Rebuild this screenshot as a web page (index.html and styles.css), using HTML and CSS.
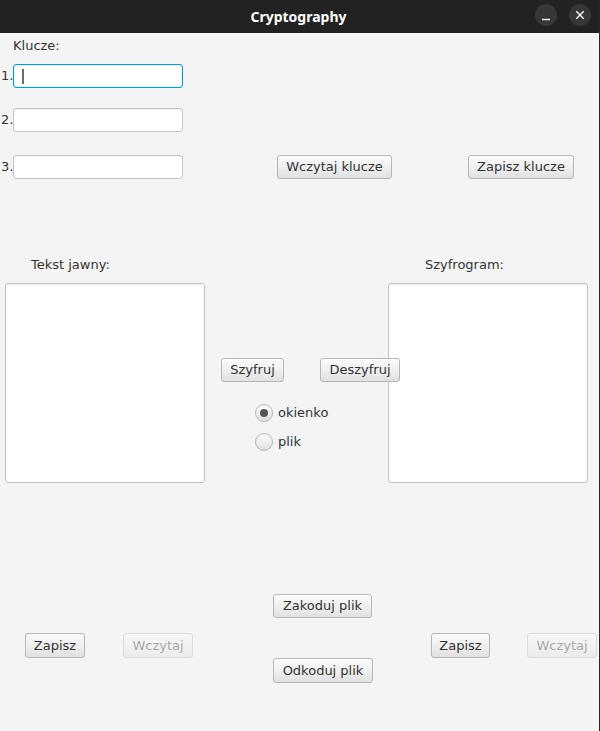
FILE: index.html
```html
<!DOCTYPE html>
<html lang="pl">
<head>
<meta charset="utf-8">
<title>Cryptography</title>
<link rel="stylesheet" href="styles.css">
</head>
<body>
<div class="window">
  <header class="titlebar">
    <span class="title">Cryptography</span>
    <div class="wm-buttons">
      <span class="wm-btn">
        <svg width="22" height="22" viewBox="0 0 22 22"><path d="M7 15.5h8" stroke="#ffffff" stroke-width="1.4"/></svg>
      </span>
      <span class="wm-btn">
        <svg width="22" height="22" viewBox="0 0 22 22"><path d="M7.3 7.3l7.4 7.4M14.7 7.3l-7.4 7.4" stroke="#ffffff" stroke-width="1.4"/></svg>
      </span>
    </div>
  </header>

  <main class="content">
    <div class="keys-title">Klucze:</div>
    <div class="key-row row-1">
      <span class="num">1.</span>
      <div class="field focused"><span class="caret"></span></div>
    </div>
    <div class="key-row row-2">
      <span class="num">2.</span>
      <div class="field"></div>
    </div>
    <div class="key-row row-3">
      <span class="num">3.</span>
      <div class="field"></div>
      <button class="btn btn-load-keys">Wczytaj klucze</button>
      <button class="btn btn-save-keys">Zapisz klucze</button>
    </div>

    <div class="labels-row">
      <span class="label-left">Tekst jawny:</span>
      <span class="label-right">Szyfrogram:</span>
    </div>

    <div class="main-row">
      <div class="textarea"></div>
      <div class="middle">
        <div class="crypt-buttons">
          <button class="btn btn-encrypt">Szyfruj</button>
          <button class="btn btn-decrypt">Deszyfruj</button>
        </div>
        <div class="radio-group">
          <label class="radio"><span class="radio-dot selected"></span>okienko</label>
          <label class="radio"><span class="radio-dot"></span>plik</label>
        </div>
      </div>
      <div class="textarea"></div>
    </div>

    <div class="bottom-row row-a">
      <button class="btn btn-file">Zakoduj plik</button>
    </div>
    <div class="bottom-row row-b">
      <button class="btn btn-save-l">Zapisz</button>
      <button class="btn btn-load-l disabled">Wczytaj</button>
      <button class="btn btn-save-r">Zapisz</button>
      <button class="btn btn-load-r disabled">Wczytaj</button>
    </div>
    <div class="bottom-row row-c">
      <button class="btn btn-file2">Odkoduj plik</button>
    </div>
  </main>
</div>
</body>
</html>
```

FILE: styles.css
```css
* { box-sizing: border-box; }

html, body {
  margin: 0;
  padding: 0;
  width: 600px;
  height: 731px;
  overflow: hidden;
  background: #f4f4f4;
}

body {
  font-family: "DejaVu Sans", sans-serif;
  font-size: 13px;
  color: #333333;
}

.window {
  width: 600px;
  height: 731px;
  background: #f4f4f4;
  border-right: 1px solid #2a2a2a;
}

/* Title bar */
.titlebar {
  height: 33px;
  background: #222222;
  display: flex;
  align-items: center;
  justify-content: center;
  position: relative;
}

.title {
  font-family: "Noto Sans", "DejaVu Sans", sans-serif;
  font-weight: bold;
  font-size: 14px;
  color: #ffffff;
  margin-left: -2px;
}

.wm-buttons {
  position: absolute;
  right: 8px;
  top: 4px;
  display: flex;
  gap: 12px;
}

.wm-btn {
  width: 22px;
  height: 22px;
  border-radius: 50%;
  background: #373737;
  display: block;
}

.wm-btn svg { display: block; }

/* Content */
.content {
  display: flex;
  flex-direction: column;
}

.keys-title {
  margin-top: 5px;
  padding-left: 13px;
  line-height: 16px;
}

.key-row {
  display: flex;
  align-items: center;
  height: 24px;
  padding-left: 1px;
}

.row-1 { margin-top: 10px; }
.row-2 { margin-top: 20px; }
.row-3 { margin-top: 23px; }

.num {
  width: 12px;
  white-space: nowrap;
  line-height: 16px;
}

.field {
  width: 170px;
  height: 24px;
  background: #ffffff;
  border: 1px solid #c4c4c4;
  border-radius: 3px;
  box-shadow: inset 0 1px 1px rgba(0,0,0,0.06);
  position: relative;
}

.field.focused {
  border: 1px solid #039ed3;
  box-shadow: inset 0 0 0 1px #dff2fa;
}

.caret {
  position: absolute;
  left: 8px;
  top: 4px;
  width: 2px;
  height: 15px;
  background: #6e6e6e;
}

/* Buttons */
.btn {
  font-family: "DejaVu Sans", sans-serif;
  font-size: 13px;
  color: #333333;
  height: 24px;
  padding: 0;
  line-height: 22px;
  text-align: center;
  border: 1px solid #b6b6b6;
  border-radius: 3px;
  background: linear-gradient(to bottom, #fbfbfb 0%, #eeeeee 55%, #e0e0e0 100%);
  box-shadow: inset 0 1px 0 rgba(255,255,255,0.8);
  white-space: nowrap;
  flex: none;
}

.btn.disabled {
  opacity: 0.4;
}

.btn-load-keys { width: 115px; margin-left: 94px; }
.btn-save-keys { width: 106px; margin-left: 76px; }

/* Labels */
.labels-row {
  margin-top: 78px;
  display: flex;
  line-height: 16px;
  padding-left: 31px;
}

.label-left { width: 394px; }

/* Main row */
.main-row {
  margin-top: 10px;
  display: flex;
  padding-left: 5px;
  height: 200px;
}

.textarea {
  width: 200px;
  height: 200px;
  background: #ffffff;
  border: 1px solid #c4c4c4;
  border-radius: 3px;
  box-shadow: inset 0 1px 2px rgba(0,0,0,0.07);
  flex: none;
}

.middle {
  width: 183px;
  flex: none;
  display: flex;
  flex-direction: column;
}

.crypt-buttons {
  margin-top: 75px;
  padding-left: 16px;
  display: flex;
}

.btn-encrypt { width: 63px; }
.btn-decrypt {
  width: 80px;
  margin-left: 36px;
  position: relative;
  z-index: 1;
}

.radio-group {
  margin-top: 22px;
  padding-left: 50px;
  display: flex;
  flex-direction: column;
  gap: 11px;
}

.radio {
  display: flex;
  align-items: center;
  height: 18px;
  gap: 5px;
  line-height: 16px;
}

.radio-dot {
  width: 18px;
  height: 18px;
  border-radius: 50%;
  border: 1px solid #b6b6b6;
  background: linear-gradient(to bottom, #fbfbfb 0%, #ececec 60%, #e0e0e0 100%);
  display: flex;
  align-items: center;
  justify-content: center;
  flex: none;
}

.radio-dot.selected::after {
  content: "";
  width: 8px;
  height: 8px;
  border-radius: 50%;
  background: #555555;
}

/* Bottom */
.bottom-row {
  display: flex;
}

.row-a {
  margin-top: 111px;
  padding-left: 273px;
}

.btn-file { width: 99px; }

.row-b {
  margin-top: 15px;
  padding-left: 25px;
}

.row-b .btn { height: 25px; line-height: 23px; }

.btn-save-l { width: 60px; }
.btn-load-l { width: 70px; margin-left: 38px; }
.btn-save-r { width: 59px; margin-left: 238px; }
.btn-load-r { width: 70px; margin-left: 37px; }

.row-c {
  padding-left: 273px;
}

.btn-file2 { width: 100px; height: 25px; line-height: 23px; }
```
